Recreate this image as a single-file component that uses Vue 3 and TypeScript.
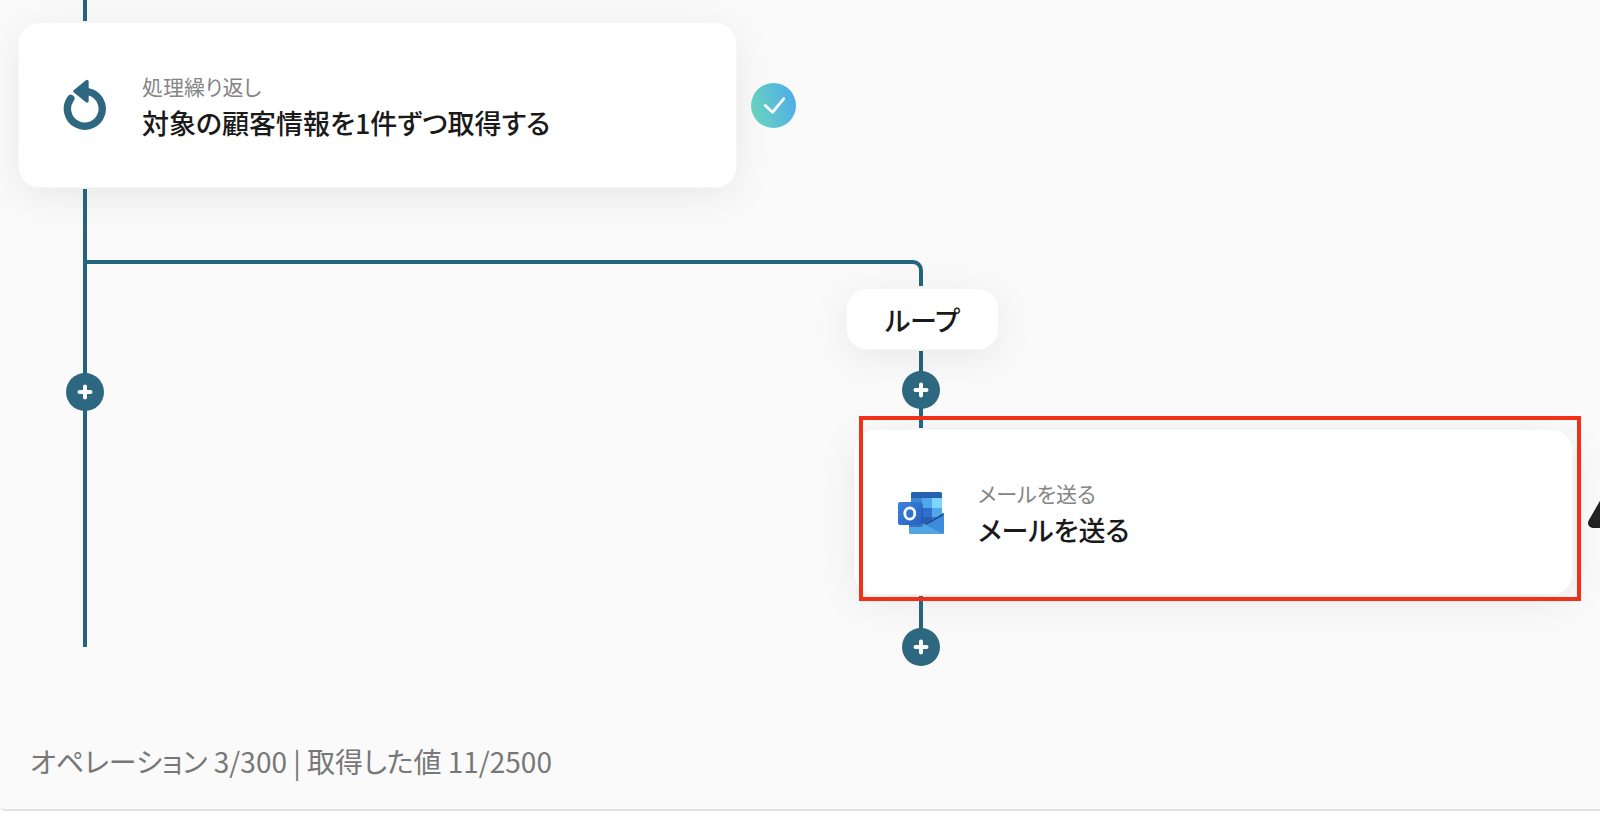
<script setup lang="ts">
interface Step {
  id: string
  caption: string
  title: string
  icon: 'repeat' | 'outlook'
}

interface AddPoint {
  id: string
  label: string
}

const steps: Step[] = [
  { id: 'repeat', caption: '処理繰り返し', title: '対象の顧客情報を1件ずつ取得する', icon: 'repeat' },
  { id: 'mail', caption: 'メールを送る', title: 'メールを送る', icon: 'outlook' },
]

const addPoints: AddPoint[] = [
  { id: 'main', label: 'ステップを追加' },
  { id: 'loop-start', label: 'ループの先頭に追加' },
  { id: 'loop-end', label: 'ループの末尾に追加' },
]
</script>

<template>
  <main class="page">
    <section class="board">
      <div class="canvas">
        <article v-for="step in steps" :key="step.id" class="card" :class="`card-${step.id}`">
          <svg v-if="step.icon === 'repeat'" class="icon" viewBox="0 0 48 54" aria-hidden="true">
            <path d="M8.800 20.500A17.400 17.400 0 1 0 25.500 13.600" fill="none" stroke="#2d6780" stroke-width="7.4" stroke-linecap="round" />
            <path d="M25 3.500V23L13 13.200Z" fill="#2d6780" stroke="#2d6780" stroke-width="3.4" stroke-linejoin="round" />
          </svg>
          <svg v-else class="icon" viewBox="0 0 48 54" aria-hidden="true">
            <defs>
              <linearGradient id="tile" x1="0" y1="0" x2="1" y2="1">
                <stop offset="0" stop-color="#3a84dc" />
                <stop offset="1" stop-color="#2860c4" />
              </linearGradient>
            </defs>
            <g transform="translate(-1 4)">
              <path d="M14 24h33v19a2 2 0 0 1-2 2H14a2 2 0 0 1-2-2z" fill="#3b8ad8" />
              <path d="M16 3h27a2 2 0 0 1 2 2v23l-14 8-17-8V5a2 2 0 0 1 2-2z" fill="#2f6fd0" />
              <path d="M16 3h27a2 2 0 0 1 2 2v4H14V5a2 2 0 0 1 2-2z" fill="#2861b2" />
              <path d="M14 9h11v10H14z" fill="#3b88d8" />
              <path d="M25 9h10v10H25z" fill="#50a8e8" />
              <path d="M35 9h10v10H35z" fill="#7cd6fb" />
              <path d="M35 19h10v10H35z" fill="#50a8e8" />
              <path d="M14 28h21v8H14z" fill="#2760ae" />
              <path d="M35 28h10l-11 8z" fill="#3577cf" />
              <path d="M45 25l2 1-16 10-2-1z" fill="#1b4791" />
              <path d="M47 26v17a2 2 0 0 1-1 2L29 36z" fill="#3d8bdb" />
              <path d="M12 27l34 18H14a2 2 0 0 1-2-2z" fill="#50a5e5" />
              <path d="M12 14h12a2 2 0 0 1 2 2v20a2 2 0 0 1-2 2H12z" fill="#204f91" opacity=".55" />
              <rect x="1" y="13" width="23.5" height="23" rx="2" fill="url(#tile)" />
              <ellipse cx="12.8" cy="24.5" rx="5" ry="5.6" fill="none" stroke="#fff" stroke-width="2.8" />
            </g>
          </svg>
          <div class="text">
            <p class="caption">{{ step.caption }}</p>
            <h2 class="title">{{ step.title }}</h2>
          </div>
        </article>

        <i class="line line-in"></i>
        <i class="line line-main"></i>
        <i class="branch"></i>
        <i class="line line-loop"></i>
        <i class="line line-out"></i>

        <div class="pill">ループ</div>

        <button v-for="point in addPoints" :key="point.id" type="button" class="add" :class="`add-${point.id}`" :aria-label="point.label">
          <svg viewBox="0 0 38 38" aria-hidden="true">
            <path d="M19 13.500v11M13.500 19h11" stroke="#fff" stroke-width="4" stroke-linecap="round" />
          </svg>
        </button>

        <svg class="done" viewBox="0 0 46 46" role="img" aria-label="完了">
          <defs>
            <linearGradient id="done-fill" x1="0" y1=".65" x2="1" y2=".35">
              <stop offset="0" stop-color="#68d4bd" />
              <stop offset="1" stop-color="#50ade9" />
            </linearGradient>
          </defs>
          <circle cx="23" cy="23" r="23" fill="url(#done-fill)" />
          <path d="M14.500 23l7.500 7L33.500 16" fill="none" stroke="#fff" stroke-width="2.8" stroke-linecap="round" stroke-linejoin="round" />
        </svg>

        <svg class="warning" viewBox="0 0 48 44" role="img" aria-label="警告">
          <path d="M24 5L43 38H5Z" fill="#222" stroke="#222" stroke-width="10" stroke-linejoin="round" />
          <path d="M24 14v13M24 33v1" stroke="#fff" stroke-width="4" stroke-linecap="round" />
        </svg>

        <div class="highlight"></div>
      </div>

      <footer class="usage">オペレーション 3/300 | 取得した値 11/2500</footer>
    </section>
  </main>
</template>

<style>
body {
  margin: 0;
  background: #fefefe;
}
</style>

<style scoped>
.page {
  overflow: hidden;
  padding-bottom: 19px;
  color: #1a1a1a;
  font-family: "Noto Sans CJK JP", "Noto Sans", sans-serif;
  font-feature-settings: "palt";
}

.board {
  background: #fafafa;
  border-bottom: 2px solid #e2e2e2;
  border-bottom-left-radius: 5px;
}

.canvas {
  position: relative;
  height: 720px;
}

.card {
  position: absolute;
  display: flex;
  align-items: center;
  gap: 32px;
  box-sizing: border-box;
  width: 717px;
  height: 164px;
  padding-left: 43px;
  background: #fff;
  border-radius: 20px;
  box-shadow: 0 0 0 1px #f6f6f6, 0 8px 40px rgba(0, 0, 0, 0.08);
}

.card-repeat {
  left: 19px;
  top: 23px;
}

.card-mail {
  left: 855px;
  top: 430px;
}

.icon {
  flex: none;
  width: 48px;
  height: 54px;
}

.text {
  padding-top: 4px;
}

.caption,
.title {
  margin: 0;
  white-space: nowrap;
}

.caption {
  color: #858585;
  font-size: 21px;
  font-weight: 400;
  line-height: 32px;
}

.title {
  font-size: 27px;
  font-weight: 500;
  line-height: 42px;
}

.line {
  position: absolute;
  width: 4px;
  background: #25647d;
}

.line-in {
  left: 83px;
  top: 0;
  height: 21px;
}

.line-main {
  left: 83px;
  top: 189px;
  height: 458px;
}

.branch {
  position: absolute;
  left: 85px;
  top: 260px;
  box-sizing: border-box;
  width: 838px;
  height: 26px;
  border: solid #25647d;
  border-width: 4px 4px 0 0;
  border-top-right-radius: 10px;
}

.line-loop {
  left: 919px;
  top: 351px;
  height: 77px;
}

.line-out {
  left: 919px;
  top: 596px;
  height: 50px;
}

.pill {
  position: absolute;
  left: 847px;
  top: 289px;
  width: 151px;
  height: 60px;
  background: #fff;
  border-radius: 20px;
  box-shadow: 0 0 0 1px #f6f6f6, 0 8px 40px rgba(0, 0, 0, 0.08);
  font-size: 27px;
  font-weight: 500;
  line-height: 62px;
  text-align: center;
}

.add {
  position: absolute;
  width: 38px;
  height: 38px;
  padding: 0;
  border: 0;
  border-radius: 50%;
  background: #2d6780;
  cursor: pointer;
}

.add svg {
  display: block;
}

.add-main {
  left: 66px;
  top: 373px;
}

.add-loop-start {
  left: 902px;
  top: 371px;
}

.add-loop-end {
  left: 902px;
  top: 628px;
}

.done {
  position: absolute;
  left: 751px;
  top: 83px;
  width: 45px;
  height: 45px;
}

.warning {
  position: absolute;
  left: 1588px;
  top: 485px;
  width: 48px;
  height: 44px;
}

.highlight {
  position: absolute;
  left: 859px;
  top: 416px;
  box-sizing: border-box;
  width: 722px;
  height: 185px;
  border: 4px solid #f03018;
  pointer-events: none;
}

.usage {
  padding: 21px 30px 28px;
  color: #777;
  font-size: 28px;
  line-height: 40px;
}
</style>
